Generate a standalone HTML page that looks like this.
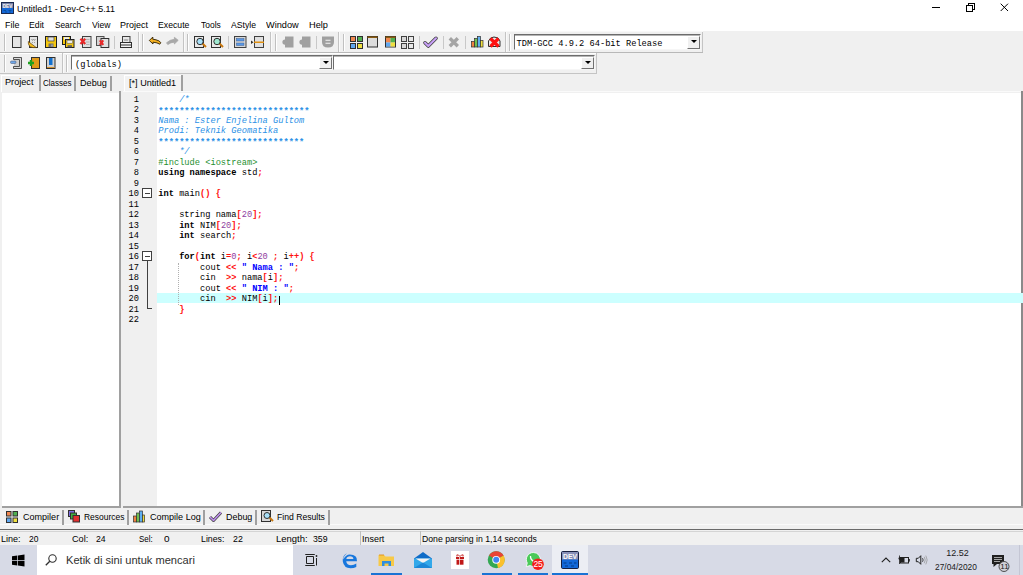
<!DOCTYPE html>
<html><head><meta charset="utf-8">
<style>
*{margin:0;padding:0;box-sizing:border-box}
html,body{width:1023px;height:575px;overflow:hidden;background:#f0f0f0;font-family:"Liberation Sans",sans-serif;color:#000}
.a{position:absolute}
.t{position:absolute;white-space:pre;font-size:10px;line-height:11px;transform:scaleX(.9);transform-origin:0 0;color:#000}
.mono{position:absolute;white-space:pre;font-family:"Liberation Mono",monospace;font-size:8.7px;line-height:10px;color:#000;}
svg{position:absolute;overflow:visible}
.ln{position:absolute;left:0;height:10.5px;white-space:pre;font-family:"Liberation Mono",monospace;font-size:8.7px;line-height:10.5px}
.c{color:#2b91e6;font-style:italic}
.pp{color:#1f9030}
.k{font-weight:bold}
.s{color:#ff1010;font-weight:bold}
.n{color:#9040a0}
.st{color:#0000ff;font-weight:bold}
</style></head><body>

<div class="a" style="left:0;top:0;width:1023px;height:31px;background:#fff"></div>
<svg class="a" style="left:0;top:0" width="20" height="20">
<rect x="1.5" y="2.5" width="12" height="11" fill="#1468d8" stroke="#1a2a50"/>
<rect x="2" y="3" width="11" height="5" fill="#7880a8"/>
<text x="7.5" y="7.6" font-family="Liberation Sans" font-weight="bold" font-size="5" fill="#f4f4f4" text-anchor="middle" textLength="9.5" lengthAdjust="spacingAndGlyphs">DEV</text>
<path d="M3.5 10.5h2.5M8.5 10.5h3M5 12h2M9 12h2" stroke="#0850a0" stroke-width="1"/>
</svg>
<div class="t" style="left:17.35px;top:3.04px;font-size:9.4px;transform:scaleX(0.95);color:#000">Untitled1 - Dev-C++ 5.11</div>
<svg class="a" style="left:920px;top:0" width="103" height="18" shape-rendering="crispEdges">
<path d="M12 7.5h8" stroke="#000"/>
<rect x="46.5" y="5.5" width="6" height="5.5" fill="none" stroke="#000"/>
<path d="M48.5 5.5V3.5H54.5V9.5H52.5" fill="none" stroke="#000"/>
</svg>
<svg class="a" style="left:1000px;top:3px" width="10" height="10"><path d="M0.7 0.7L8 8M8 0.7L0.7 8" stroke="#000" stroke-width="1"/></svg>
<div class="t" style="left:4.9px;top:19.04px;font-size:9.4px;transform:scaleX(0.954);color:#000">File</div>
<div class="t" style="left:28.73px;top:19.04px;font-size:9.4px;transform:scaleX(0.928);color:#000">Edit</div>
<div class="t" style="left:54.59px;top:19.04px;font-size:9.4px;transform:scaleX(0.882);color:#000">Search</div>
<div class="t" style="left:91.5px;top:19.04px;font-size:9.4px;transform:scaleX(0.915);color:#000">View</div>
<div class="t" style="left:120.1px;top:19.04px;font-size:9.4px;transform:scaleX(0.957);color:#000">Project</div>
<div class="t" style="left:158.03px;top:19.04px;font-size:9.4px;transform:scaleX(0.927);color:#000">Execute</div>
<div class="t" style="left:200.5px;top:19.04px;font-size:9.4px;transform:scaleX(0.902);color:#000">Tools</div>
<div class="t" style="left:230.9px;top:19.04px;font-size:9.4px;transform:scaleX(0.922);color:#000">AStyle</div>
<div class="t" style="left:266.0px;top:19.04px;font-size:9.4px;transform:scaleX(0.98);color:#000">Window</div>
<div class="t" style="left:308.97px;top:19.04px;font-size:9.4px;transform:scaleX(0.985);color:#000">Help</div>
<svg class="a" style="left:0;top:0" width="1023" height="120">
<!-- band lines -->
<rect x="0" y="31" width="703" height="1" fill="#f8f8f8"/>
<rect x="0" y="52" width="703" height="1" fill="#b8b8b8"/>
<rect x="0" y="53" width="597" height="1" fill="#ffffff"/>
<rect x="0" y="73" width="597" height="1" fill="#c4c4c4"/>
<g shape-rendering="crispEdges">
<path d="M4.5 34V51M142.5 34V51M187.5 34V51M275.5 34V51M343.5 34V51M509.5 34V51M4.5 55V72M66.5 55V72" stroke="#c0c0c0"/>
<path d="M5.5 34V51M143.5 34V51M188.5 34V51M276.5 34V51M344.5 34V51M510.5 34V51M5.5 55V72M67.5 55V72" stroke="#ffffff"/>
<path d="M138.5 32V52M183.5 32V52M270.5 32V52M338.5 32V52M505.5 32V52M702.5 32V52M62.5 53V73M596.5 53V73" stroke="#c4c4c4"/>
<path d="M139.5 32V52M184.5 32V52M271.5 32V52M339.5 32V52M506.5 32V52M63.5 53V73" stroke="#fafafa"/>
<path d="M114.5 36V49M228.5 36V49M316.5 36V49M419.5 36V49M443.5 36V49M465.5 36V49" stroke="#c8c8c8"/>
</g>
<!-- new -->
<rect x="12.5" y="36.5" width="8.5" height="11" fill="#e4e4e4" stroke="#303030"/>
<!-- open -->
<rect x="29.5" y="36.5" width="8" height="11" fill="#e4e4e4" stroke="#303030"/>
<path d="M31.5 39l1 1.5 1-1.5 1 1.5 1-1.5M32 42.5h1M34 42.5h1" stroke="#909090" fill="none" stroke-width="0.8"/>
<path d="M28.3 41.5L36.3 47.6H33Q28 47 28.3 41.5z" fill="#f6c020" stroke="#604010" stroke-width="0.7"/>
<!-- save -->
<rect x="45.5" y="36.5" width="11" height="11" fill="#f5c810" stroke="#202020"/>
<rect x="48" y="37" width="6" height="4" fill="#e0e0e0" stroke="#404040" stroke-width="0.7"/>
<rect x="48.5" y="43.5" width="5" height="3.5" fill="#707070"/>
<path d="M52 44.5v2" stroke="#e0e0e0" stroke-width="0.8"/>
<!-- save all -->
<rect x="62.5" y="36.5" width="8" height="8" fill="#f5c810" stroke="#202020"/>
<rect x="64" y="37.2" width="5" height="2.5" fill="#f0f0f0"/>
<rect x="65.5" y="39.5" width="8.5" height="8" fill="#f5c810" stroke="#202020"/>
<rect x="67" y="40.2" width="5.5" height="3" fill="#f0f0f0" stroke="#505050" stroke-width="0.5"/>
<rect x="67.5" y="45.2" width="4.5" height="2" fill="#606060"/>
<!-- close -->
<rect x="82.5" y="36.5" width="8.5" height="11" fill="#e0e0e0" stroke="#404040"/>
<path d="M86 39.5h3.5M86 42h3.5M86 44.5h3.5" stroke="#a8a8a8" stroke-width="0.8"/>
<path d="M80.5 38.8L85.2 44M85.2 38.8L80.5 44" stroke="#e82828" stroke-width="2.3"/>
<!-- close all -->
<rect x="96.5" y="36.5" width="7.5" height="9" fill="#d4d4d4" stroke="#505050"/>
<rect x="101" y="38.5" width="7.8" height="9" fill="#e0e0e0" stroke="#303030"/>
<path d="M99.8 40.3L103.3 44.8M103.3 40.3L99.8 44.8" stroke="#e82828" stroke-width="2"/>
<!-- print -->
<rect x="122.5" y="36.5" width="7.5" height="6" fill="#e8e8e8" stroke="#404040"/>
<path d="M124 39l1 2 1-2 1 2 1-2" stroke="#909090" fill="none" stroke-width="0.7"/>
<rect x="120.5" y="42.5" width="11" height="5" fill="#f4f4f4" stroke="#303030"/>
<path d="M121 45h10" stroke="#303030"/>
<!-- undo -->
<path d="M149.3 40.5L152.8 37V39.2L156 39.8Q159.5 40.6 160.8 42.6L159.8 44.2Q157.5 42.6 153 42.2V44z" fill="#f4b020" stroke="#302000" stroke-width="0.9" stroke-linejoin="round"/>
<!-- redo -->
<path d="M178.2 40.3L174.4 37.3V39.3Q170 39.6 166.5 42.8L167.8 44.6Q170.5 42.3 174.4 42.2V44z" fill="#a8a8a8" stroke="#a8a8a8" stroke-width="0.8" stroke-linejoin="round"/>
<!-- find -->
<rect x="194.5" y="36.5" width="9" height="11" fill="#e8e8e8" stroke="#303030"/>
<path d="M202.5 43.5L206 47" stroke="#c87810" stroke-width="2"/>
<circle cx="200" cy="41.5" r="3.2" fill="#a8e0f8" stroke="#303030" stroke-width="1"/>
<rect x="211.5" y="36.5" width="9" height="11" fill="#e8e8e8" stroke="#303030"/>
<path d="M219.5 43.5L223 47" stroke="#c87810" stroke-width="2"/>
<circle cx="217" cy="41.5" r="3.2" fill="#a0e8d0" stroke="#303030" stroke-width="1"/>
<!-- two bars -->
<rect x="234.5" y="36.5" width="11.5" height="11" fill="#d8d8d8" stroke="#404040"/>
<rect x="236.5" y="38.5" width="7.5" height="2.5" fill="#5898e8" stroke="#406090" stroke-width="0.5"/>
<rect x="236.5" y="43" width="7.5" height="2.5" fill="#5898e8" stroke="#406090" stroke-width="0.5"/>
<!-- bookmark line -->
<rect x="254.5" y="36.5" width="9" height="11" fill="#e0e0e0" stroke="#404040"/>
<rect x="254" y="41.5" width="10" height="1.5" fill="#e09010"/>
<path d="M251 40.5L253.5 42.2L251 44z" fill="#303030"/>
<!-- gray bookmarks -->
<path d="M285 36.5H293.5V47.5H285V44.7A2.6 2.6 0 0 1 285 39.5z" fill="#a0a0a0"/>
<path d="M302 36.5H310.5V47.5H302V44.7A2.6 2.6 0 0 1 302 39.5z" fill="#a0a0a0"/>
<!-- shield -->
<path d="M322 36.5H334V42Q334 47.5 328 47.5Q322 47.5 322 42z" fill="#a0a0a0"/>
<path d="M325.5 40.2h5M325.5 43.2h5" stroke="#f4f4f4" stroke-width="1.1"/>
<!-- color grid -->
<rect x="350.5" y="36.5" width="5" height="5" fill="#f08850" stroke="#303030"/>
<rect x="357.5" y="36.5" width="5" height="5" fill="#50b050" stroke="#303030"/>
<rect x="350.5" y="43.5" width="5" height="5" fill="#60a8f0" stroke="#303030"/>
<rect x="357.5" y="43.5" width="5" height="5" fill="#f0e040" stroke="#303030"/>
<!-- window -->
<rect x="367.5" y="36.5" width="10" height="10.5" fill="#dcdcdc" stroke="#303030"/>
<rect x="367.5" y="36.5" width="10" height="1.5" fill="#8a5a10"/>
<!-- color window -->
<rect x="385.5" y="36.5" width="10" height="10.5" fill="#dcdcdc" stroke="#303030"/>
<rect x="386" y="38" width="4.5" height="4.5" fill="#f08850"/>
<rect x="390.5" y="38" width="4.5" height="4.5" fill="#50b050"/>
<rect x="386" y="42.5" width="4.5" height="4" fill="#60a8f0"/>
<rect x="390.5" y="42.5" width="4.5" height="4" fill="#f0e040"/>
<rect x="385.5" y="36.5" width="10" height="1.5" fill="#8a5a10"/>
<!-- gray grid -->
<rect x="401.5" y="36.5" width="5" height="5" fill="#d8d8d8" stroke="#404040"/>
<rect x="408.5" y="36.5" width="5" height="5" fill="#e8e8e8" stroke="#404040"/>
<rect x="401.5" y="43.5" width="5" height="5" fill="#d8d8d8" stroke="#404040"/>
<rect x="408.5" y="43.5" width="5" height="5" fill="#e8e8e8" stroke="#404040"/>
<!-- check -->
<path d="M425 42.8L428.3 46L436 38.3" stroke="#404040" stroke-width="3.6" fill="none" stroke-linejoin="round" stroke-linecap="round"/>
<path d="M425 42.8L428.3 46L436 38.3" stroke="#c8a0f8" stroke-width="2" fill="none" stroke-linejoin="round" stroke-linecap="round"/>
<!-- gray x -->
<path d="M449.8 38.3L457.8 46.3M457.8 38.3L449.8 46.3" stroke="#a4a4a4" stroke-width="3.4"/>
<!-- chart -->
<rect x="471.5" y="41.5" width="3" height="5.5" fill="#f08040" stroke="#303030" stroke-width="0.7"/>
<rect x="474.5" y="38.5" width="3" height="8.5" fill="#70c050" stroke="#303030" stroke-width="0.7"/>
<rect x="477.5" y="36.5" width="3" height="10.5" fill="#60b0f0" stroke="#303030" stroke-width="0.7"/>
<rect x="480.5" y="40.5" width="2.5" height="6.5" fill="#f0e040" stroke="#303030" stroke-width="0.7"/>
<!-- red x chart -->
<path d="M488.5 46.5V41Q490 37 494 37Q499 37 500 41V46.5z" fill="#e8e8e8" stroke="#303030"/>
<path d="M490.5 38.5L498.5 46.5M498.5 38.5L490.5 46.5" stroke="#ff1010" stroke-width="3.2"/>
<!-- row2 icons -->
<path d="M13.5 57.5H21.5V68.5H13.5V66.5H19.5V59.5H13.5z" fill="#d8d8d8" stroke="#404040" stroke-width="0.9"/><rect x="14" y="60" width="5" height="6" fill="#d0d0d0"/>
<rect x="10.5" y="61" width="5.5" height="2.5" rx="1" fill="#70a8e8" stroke="#506080" stroke-width="0.6"/>
<rect x="31.5" y="57.5" width="8" height="11" fill="#e09a18" stroke="#303030"/>
<path d="M31 60V66M28 63H34" stroke="#20a020" stroke-width="2.4"/>
<rect x="46.5" y="57.5" width="8.5" height="11" fill="#d0d0d0" stroke="#303030"/>
<rect x="49" y="58" width="3.5" height="7" fill="#1070d0"/>
<rect x="47" y="67" width="7.5" height="1" fill="#d09030"/>
</svg>

<div class="a" style="left:514px;top:34px;width:187px;height:16px;background:#fff;border-top:1px solid #6c6c6c;border-left:1px solid #6c6c6c;border-bottom:1px solid #f6f6f6;border-right:1px solid #f6f6f6"></div><div class="a" style="left:515px;top:35px;width:185px;height:1px;background:#b4b4b4"></div><div class="a" style="left:687px;top:36px;width:13px;height:13px;background:#f0f0f0;border-top:1px solid #fff;border-left:1px solid #fff;border-bottom:1px solid #727272;border-right:1px solid #727272"></div><div class="a" style="left:690.5px;top:40px;width:0;height:0;border-left:3px solid transparent;border-right:3px solid transparent;border-top:3.5px solid #000"></div><div class="mono" style="left:516.5px;top:38.9px">TDM-GCC 4.9.2 64-bit Release</div>
<div class="a" style="left:71px;top:55px;width:262px;height:15px;background:#fff;border-top:1px solid #6c6c6c;border-left:1px solid #6c6c6c;border-bottom:1px solid #f6f6f6;border-right:1px solid #f6f6f6"></div><div class="a" style="left:72px;top:56px;width:260px;height:1px;background:#b4b4b4"></div><div class="a" style="left:319px;top:57px;width:13px;height:12px;background:#f0f0f0;border-top:1px solid #fff;border-left:1px solid #fff;border-bottom:1px solid #727272;border-right:1px solid #727272"></div><div class="a" style="left:322.5px;top:61px;width:0;height:0;border-left:3px solid transparent;border-right:3px solid transparent;border-top:3.5px solid #000"></div><div class="mono" style="left:75px;top:59.7px">(globals)</div>
<div class="a" style="left:333px;top:55px;width:262px;height:15px;background:#fff;border-top:1px solid #6c6c6c;border-left:1px solid #6c6c6c;border-bottom:1px solid #f6f6f6;border-right:1px solid #f6f6f6"></div><div class="a" style="left:334px;top:56px;width:260px;height:1px;background:#b4b4b4"></div><div class="a" style="left:581px;top:57px;width:13px;height:12px;background:#f0f0f0;border-top:1px solid #fff;border-left:1px solid #fff;border-bottom:1px solid #727272;border-right:1px solid #727272"></div><div class="a" style="left:584.5px;top:61px;width:0;height:0;border-left:3px solid transparent;border-right:3px solid transparent;border-top:3.5px solid #000"></div>
<div class="a" style="left:1px;top:75px;width:39px;height:17px;background:#f0f0f0;border-top:1px solid #fff;border-left:1px solid #fff"></div>
<div class="t" style="left:5.28px;top:76.44px;font-size:9.4px;transform:scaleX(0.975);color:#000">Project</div>
<div class="a" style="left:39px;top:75px;width:2px;height:16px;background:#a0a0a0"></div>
<div class="t" style="left:42.5px;top:77.88px;font-size:9.0px;transform:scaleX(0.889);color:#000">Classes</div>
<div class="a" style="left:74px;top:76px;width:2px;height:15px;background:#a0a0a0"></div>
<div class="t" style="left:79.89px;top:77.88px;font-size:9.0px;transform:scaleX(1.012);color:#000">Debug</div>
<div class="a" style="left:110px;top:76px;width:2px;height:15px;background:#a0a0a0"></div>
<div class="a" style="left:124px;top:75px;width:58px;height:17px;background:#f2f2f2;border-top:1px solid #fff;border-left:1px solid #fff"></div>
<div class="t" style="left:128.74px;top:76.94px;font-size:9.4px;transform:scaleX(0.972);color:#000">[*] Untitled1</div>
<div class="a" style="left:181px;top:75px;width:2px;height:16px;background:#a0a0a0"></div>
<div class="a" style="left:2px;top:93px;width:117px;height:413px;background:#fff"></div>
<div class="a" style="left:119px;top:91px;width:2px;height:417px;background:#a0a0a0"></div>
<div class="a" style="left:2px;top:506px;width:119px;height:2px;background:#a0a0a0"></div>
<div class="a" style="left:125px;top:93px;width:32px;height:413px;background:#f0f0f0"></div>
<div class="a" style="left:157px;top:93px;width:864px;height:413px;background:#fff"></div>
<div class="a" style="left:1021px;top:91px;width:2px;height:417px;background:#8a8a8a"></div>
<div class="a" style="left:123px;top:91px;width:898px;height:1px;background:#fafafa"></div>
<div class="a" style="left:123px;top:506px;width:900px;height:2px;background:#a0a0a0"></div>
<div id="code" class="a" style="left:158.3px;top:94.7px;width:866px;height:240px">
<div class="a" style="left:0;top:198.3px;left:-1.3px;width:866px;height:10.5px;background:#ccffff"></div>
<div class="a" style="left:19.5px;top:168px;width:0;height:42px;border-left:1px dotted #b0b0b0"></div>
<div class="ln" style="top:0.0px"><span class="c">    /*</span></div>
<div class="ln" style="top:10.5px"><span class="c" style="position:relative;top:1.8px;font-weight:bold;font-style:normal">*****************************</span></div>
<div class="ln" style="top:21.0px"><span class="c">Nama : Ester Enjelina Gultom</span></div>
<div class="ln" style="top:31.5px"><span class="c">Prodi: Teknik Geomatika</span></div>
<div class="ln" style="top:42.0px"><span class="c" style="position:relative;top:1.8px;font-weight:bold;font-style:normal">****************************</span></div>
<div class="ln" style="top:52.5px"><span class="c">    */</span></div>
<div class="ln" style="top:63.0px"><span class="pp">#include &lt;iostream&gt;</span></div>
<div class="ln" style="top:73.5px"><span class="k">using</span> <span class="k">namespace</span> std<span class="s">;</span></div>
<div class="ln" style="top:84.0px"></div>
<div class="ln" style="top:94.5px"><span class="k">int</span> main<span class="s">()</span> <span class="s">{</span></div>
<div class="ln" style="top:105.0px"></div>
<div class="ln" style="top:115.5px">    string nama<span class="s">[</span><span class="n">20</span><span class="s">];</span></div>
<div class="ln" style="top:126.0px">    <span class="k">int</span> NIM<span class="s">[</span><span class="n">20</span><span class="s">];</span></div>
<div class="ln" style="top:136.5px">    <span class="k">int</span> search<span class="s">;</span></div>
<div class="ln" style="top:147.0px"></div>
<div class="ln" style="top:157.5px">    <span class="k">for</span><span class="s">(</span><span class="k">int</span> i<span class="s">=</span><span class="n">0</span><span class="s">;</span> i<span class="s">&lt;</span><span class="n">20</span> <span class="s">;</span> i<span class="s">++)</span> <span class="s">{</span></div>
<div class="ln" style="top:168.0px">        cout <span class="s">&lt;&lt;</span> <span class="st">" Nama : "</span><span class="s">;</span></div>
<div class="ln" style="top:178.5px">        cin  <span class="s">&gt;&gt;</span> nama<span class="s">[</span>i<span class="s">];</span></div>
<div class="ln" style="top:189.0px">        cout <span class="s">&lt;&lt;</span> <span class="st">" NIM : "</span><span class="s">;</span></div>
<div class="ln" style="top:199.5px">        cin  <span class="s">&gt;&gt;</span> NIM<span class="s">[</span>i<span class="s">];</span></div>
<div class="ln" style="top:210.0px">    <span class="s">}</span></div>
<div class="ln" style="top:220.5px"></div>
<div class="a" style="left:121px;top:201px;width:1px;height:9px;background:#000"></div>
</div>
<div id="gut" class="a" style="left:125px;top:94.7px;width:32px;height:240px">
<div class="ln" style="top:0.0px;right:18px;left:auto;text-align:right">1</div>
<div class="ln" style="top:10.5px;right:18px;left:auto;text-align:right">2</div>
<div class="ln" style="top:21.0px;right:18px;left:auto;text-align:right">3</div>
<div class="ln" style="top:31.5px;right:18px;left:auto;text-align:right">4</div>
<div class="ln" style="top:42.0px;right:18px;left:auto;text-align:right">5</div>
<div class="ln" style="top:52.5px;right:18px;left:auto;text-align:right">6</div>
<div class="ln" style="top:63.0px;right:18px;left:auto;text-align:right">7</div>
<div class="ln" style="top:73.5px;right:18px;left:auto;text-align:right">8</div>
<div class="ln" style="top:84.0px;right:18px;left:auto;text-align:right">9</div>
<div class="ln" style="top:94.5px;right:18px;left:auto;text-align:right">10</div>
<div class="ln" style="top:105.0px;right:18px;left:auto;text-align:right">11</div>
<div class="ln" style="top:115.5px;right:18px;left:auto;text-align:right">12</div>
<div class="ln" style="top:126.0px;right:18px;left:auto;text-align:right">13</div>
<div class="ln" style="top:136.5px;right:18px;left:auto;text-align:right">14</div>
<div class="ln" style="top:147.0px;right:18px;left:auto;text-align:right">15</div>
<div class="ln" style="top:157.5px;right:18px;left:auto;text-align:right">16</div>
<div class="ln" style="top:168.0px;right:18px;left:auto;text-align:right">17</div>
<div class="ln" style="top:178.5px;right:18px;left:auto;text-align:right">18</div>
<div class="ln" style="top:189.0px;right:18px;left:auto;text-align:right">19</div>
<div class="ln" style="top:199.5px;right:18px;left:auto;text-align:right">20</div>
<div class="ln" style="top:210.0px;right:18px;left:auto;text-align:right">21</div>
<div class="ln" style="top:220.5px;right:18px;left:auto;text-align:right">22</div>
</div>

<svg class="a" style="left:0;top:0" width="200" height="340" shape-rendering="crispEdges">
<rect x="142.5" y="188.5" width="9" height="9" fill="#fff" stroke="#404040"/>
<path d="M144.5 193.5h5" stroke="#404040"/>
<rect x="142.5" y="251.5" width="9" height="9" fill="#fff" stroke="#404040"/>
<path d="M144.5 256.5h5" stroke="#404040"/>
<path d="M147.5 261V308.5H152" fill="none" stroke="#404040"/>
</svg>
<div class="a" style="left:0;top:524px;width:1023px;height:1px;background:#fafafa"></div>
<div class="a" style="left:0;top:529px;width:1023px;height:1px;background:#6a6a6a"></div>
<div class="a" style="left:0;top:531px;width:1023px;height:1px;background:#d4d4d4"></div>
<div class="t" style="left:22.55px;top:511.68px;font-size:9.0px;transform:scaleX(1.004);color:#000">Compiler</div>
<div class="a" style="left:62px;top:510px;width:2px;height:15px;background:#a0a0a0"></div>
<div class="t" style="left:84.15px;top:511.68px;font-size:9.0px;transform:scaleX(0.939);color:#000">Resources</div>
<div class="a" style="left:127px;top:510px;width:2px;height:15px;background:#a0a0a0"></div>
<div class="t" style="left:149.85px;top:511.68px;font-size:9.0px;transform:scaleX(1.004);color:#000">Compile Log</div>
<div class="a" style="left:203px;top:510px;width:2px;height:15px;background:#a0a0a0"></div>
<div class="t" style="left:226.01px;top:511.68px;font-size:9.0px;transform:scaleX(0.992);color:#000">Debug</div>
<div class="a" style="left:255px;top:510px;width:2px;height:15px;background:#a0a0a0"></div>
<div class="t" style="left:277.14px;top:511.68px;font-size:9.0px;transform:scaleX(0.958);color:#000">Find Results</div>
<div class="a" style="left:328px;top:510px;width:2px;height:15px;background:#a0a0a0"></div>
<svg class="a" style="left:0;top:0" width="300" height="575">
<rect x="6.5" y="511.5" width="4.5" height="4.5" fill="#f08850" stroke="#303030"/>
<rect x="13" y="511.5" width="4.5" height="4.5" fill="#50b050" stroke="#303030"/>
<rect x="6.5" y="518" width="4.5" height="4.5" fill="#60a8f0" stroke="#303030"/>
<rect x="13" y="518" width="4.5" height="4.5" fill="#f0e040" stroke="#303030"/>
<rect x="68.5" y="510.5" width="6" height="6" fill="#8070e0" stroke="#303030"/>
<rect x="70.5" y="513" width="6" height="6" fill="#40b040" stroke="#303030"/>
<rect x="73" y="515.5" width="6.5" height="6.5" fill="#e03030" stroke="#303030"/>
<rect x="133.5" y="516" width="3" height="6" fill="#f08040" stroke="#303030" stroke-width="0.7"/>
<rect x="136.5" y="513" width="3" height="9" fill="#70c050" stroke="#303030" stroke-width="0.7"/>
<rect x="139.5" y="511" width="3" height="11" fill="#60b0f0" stroke="#303030" stroke-width="0.7"/>
<rect x="142.5" y="515" width="2" height="7" fill="#f0e040" stroke="#303030" stroke-width="0.7"/>
<path d="M210 517L213.5 520.5L221 512.5" stroke="#404040" stroke-width="3" fill="none" stroke-linejoin="round"/>
<path d="M210 517L213.5 520.5L221 512.5" stroke="#c090f0" stroke-width="1.6" fill="none" stroke-linejoin="round"/>
<rect x="261.5" y="510.5" width="9" height="11" fill="#d8d8d8" stroke="#303030"/>
<path d="M269.5 517.5L273 521" stroke="#c87810" stroke-width="2"/>
<circle cx="267" cy="515.5" r="3" fill="#a8e0f8" stroke="#303030" stroke-width="1"/>
</svg>
<div class="a" style="left:0;top:545px;width:1023px;height:1px;background:#e8e8e8"></div>
<div class="t" style="left:1.2px;top:532.74px;font-size:9.4px;transform:scaleX(0.963);color:#000">Line:</div>
<div class="t" style="left:28.58px;top:532.74px;font-size:9.4px;transform:scaleX(0.902);color:#000">20</div>
<div class="t" style="left:71.74px;top:532.74px;font-size:9.4px;transform:scaleX(0.974);color:#000">Col:</div>
<div class="t" style="left:96.07px;top:532.74px;font-size:9.4px;transform:scaleX(0.922);color:#000">24</div>
<div class="t" style="left:139.2px;top:532.74px;font-size:9.4px;transform:scaleX(0.844);color:#000">Sel:</div>
<div class="t" style="left:163.5px;top:532.74px;font-size:9.4px;transform:scaleX(1.064);color:#000">0</div>
<div class="t" style="left:201.12px;top:532.74px;font-size:9.4px;transform:scaleX(0.936);color:#000">Lines:</div>
<div class="t" style="left:233.26px;top:532.74px;font-size:9.4px;transform:scaleX(0.936);color:#000">22</div>
<div class="t" style="left:275.55px;top:532.74px;font-size:9.4px;transform:scaleX(1.01);color:#000">Length:</div>
<div class="t" style="left:312.56px;top:532.74px;font-size:9.4px;transform:scaleX(0.931);color:#000">359</div>
<div class="t" style="left:361.8px;top:532.74px;font-size:9.4px;transform:scaleX(0.953);color:#000">Insert</div>
<div class="t" style="left:421.83px;top:532.74px;font-size:9.4px;transform:scaleX(0.926);color:#000">Done parsing in 1,14 seconds</div>
<div class="a" style="left:360px;top:531px;width:1px;height:14px;background:#c0c0c0"></div>
<div class="a" style="left:420px;top:531px;width:1px;height:14px;background:#c0c0c0"></div>
<div class="a" style="left:0;top:545px;width:1023px;height:30px;background:#d7dae6"></div>
<div class="a" style="left:37px;top:545px;width:256px;height:30px;background:#fff"></div>
<div class="t" style="left:65.5px;top:553.5px;font-size:11.5px;line-height:13px;transform:scaleX(.965);color:#303030">Ketik di sini untuk mencari</div>
<svg class="a" style="left:0;top:545px" width="1023" height="30">
<g transform="translate(0,-545)">
<!-- start logo -->
<path d="M12 556.3L17.3 555.6V560.2H12z M18 555.5L24.5 554.6V560.2H18z M12 560.9H17.3V565.5L12 564.8z M18 560.9H24.5V566.5L18 565.6z" fill="#000"/>
<!-- search magnifier -->
<circle cx="52.5" cy="558.5" r="3.7" fill="none" stroke="#303030" stroke-width="1.1"/>
<path d="M49.8 561.2L45.8 565.2" stroke="#303030" stroke-width="1.3"/>
<!-- task view -->
<path d="M305.5 555V554.5H314.5V555M305.5 565V565.5H314.5V565M306.5 556.5H313.5V563.5H306.5z" fill="none" stroke="#202020" stroke-width="1"/>
<path d="M316.5 558V565.5" stroke="#202020"/>
<circle cx="316.5" cy="556" r="0.9" fill="#202020"/>
<!-- edge -->
<path d="M357 561.2H346.2Q346.8 565.3 351 565.3Q354 565.3 356.3 563.6V567Q353.8 568.2 350.5 568.2Q344 568.2 342.8 561.5Q342.4 555.2 347 553.3Q342.8 557 343.3 559.5Q346 554.5 349.8 554.5Q357.5 554.5 357 561.2z M346.3 559H353.4Q353.2 556.3 350 556.3Q346.8 556.3 346.3 559z" fill="#1877dd" fill-rule="evenodd"/>
<!-- explorer -->
<path d="M378.5 555H384L385.5 556.5H394V566H378.5z" fill="#f7c948"/>
<path d="M379 555H384" stroke="#e09018" stroke-width="0.9"/>
<path d="M382 561H391V566H388.5V563.5H384.5V566H382z" fill="#2f8ee0"/>
<rect x="371" y="573" width="31" height="2" fill="#1a73d4"/>
<!-- mail -->
<path d="M414 558.5L423 552L432 558.5V568H414z" fill="#0f6cc8"/>
<path d="M414 558.5H432V568H414z" fill="#32a8ea"/>
<path d="M415.5 558.5H430.5L423 563z" fill="#f4f4f4"/>
<path d="M414 568L423 562.5L432 568z" fill="#1c88d8"/>
<!-- gift -->
<rect x="451" y="551" width="18" height="18" fill="#fff"/>
<rect x="456" y="557" width="8" height="2" fill="#c01818"/>
<rect x="456.5" y="559.7" width="7" height="5" fill="#c01818"/>
<path d="M459.5 557V565" stroke="#fff" stroke-width="0.7"/>
<path d="M457 556.5Q456 554 458.5 555L460 556.5L461.5 555Q464 554 463 556.5" fill="none" stroke="#c01818" stroke-width="0.9"/>
<!-- chrome -->
<circle cx="496.2" cy="559.8" r="8.5" fill="#34a853"/>
<path d="M496.2 559.8L489 555.5A8.5 8.5 0 0 1 503.6 555.5z" fill="#ea4335"/>
<path d="M496.2 559.8L503.6 555.5A8.5 8.5 0 0 1 498 568.1z" fill="#fbc02d"/>
<circle cx="496.2" cy="559.8" r="3.9" fill="#fff"/>
<circle cx="496.2" cy="559.8" r="3.0" fill="#4285f4"/>
<rect x="482" y="573" width="30" height="2" fill="#1a73d4"/>
<!-- whatsapp -->
<path d="M533.3 552.5A7 7 0 1 1 530 565.6L526.3 566.6L527.3 563A7 7 0 0 1 533.3 552.5z" fill="#4ac959" stroke="#fff" stroke-width="0.8"/>
<path d="M530.5 556Q530.2 559.5 534.5 562.3L536 561" fill="none" stroke="#fff" stroke-width="1.3"/>
<circle cx="538" cy="564.2" r="5.8" fill="#f51b1b"/>
<rect x="518" y="573" width="30" height="2" fill="#1a73d4"/>
<!-- dev active -->
<rect x="552" y="545" width="36" height="30" fill="#eceef4"/>
<rect x="561.5" y="551.5" width="17" height="17" rx="1.2" fill="#1468d8" stroke="#182040" stroke-width="1"/>
<rect x="562" y="552" width="16" height="7.5" fill="#8890b8"/>
<text x="570" y="559" font-family="Liberation Sans" font-weight="bold" font-size="7.5" fill="#fafafa" text-anchor="middle" textLength="14" lengthAdjust="spacingAndGlyphs">DEV</text>
<path d="M563.5 563h3M569 563h3M574 563h2.5M565 566h3M571 566h3" stroke="#0a4aa0" stroke-width="1.4"/>
<rect x="552" y="573" width="36" height="2" fill="#1a73d4"/>
<!-- tray -->
<path d="M881.8 562.2L886 558L890.2 562.2" fill="none" stroke="#202020" stroke-width="1.1"/>
<rect x="900.5" y="557.5" width="8" height="5.5" fill="none" stroke="#202020"/>
<rect x="901" y="558" width="3.5" height="4.5" fill="#202020"/>
<rect x="908.5" y="559" width="1.3" height="2.6" fill="#202020"/>
<path d="M899.5 555.5V564" stroke="#303030" stroke-width="0.9"/>
<circle cx="899.8" cy="558.6" r="1.3" fill="#202020"/>
<path d="M916.3 558.3H918.3L920.8 555.7V564.3L918.3 561.7H916.3z" fill="none" stroke="#202020" stroke-width="1"/>
<path d="M922.5 558.2Q923.8 560 922.5 561.8" fill="none" stroke="#303030" stroke-width="0.9"/>
<path d="M924.2 556.8Q926.3 560 924.2 563.2M925.8 555.6Q928.6 560 925.8 564.4" fill="none" stroke="#909090" stroke-width="0.7"/>
<path d="M992 555H1004V564H997L993.5 567V564H992z" fill="#202020"/>
<path d="M994 557.5H1002M994 559.5H1002M994 561.5H1000" stroke="#e0e0e0" stroke-width="0.7"/>
<circle cx="1004" cy="566.5" r="5" fill="#d0d0d8" stroke="#404040" stroke-width="0.9"/>
<rect x="1019" y="545" width="1" height="30" fill="#c4c6d4"/>
</g>
</svg>
<div class="t" style="left:533.4px;top:559.2px;font-size:8.5px;line-height:10px;transform:none;color:#fff">25</div>
<div class="t" style="left:1000.3px;top:561.5px;font-size:8px;line-height:10px;transform:none;color:#202020">11</div>
<div class="t" style="left:946.2px;top:548px;font-size:9px;line-height:10px;transform:none;color:#202020">12.52</div>
<div class="t" style="left:935.2px;top:562px;font-size:9px;line-height:10px;transform:scaleX(.93);color:#202020">27/04/2020</div>
</body></html>
